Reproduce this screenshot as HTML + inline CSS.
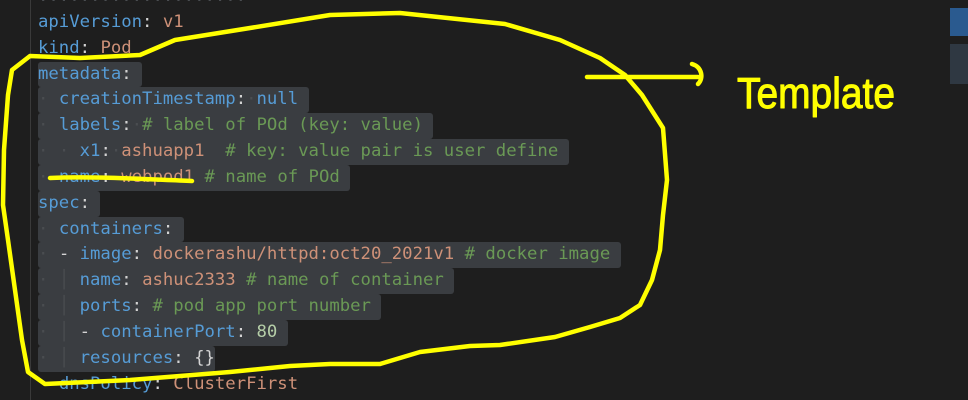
<!DOCTYPE html>
<html><head><meta charset="utf-8"><style>
html,body{margin:0;padding:0;width:968px;height:400px;background:#1e1e1e;overflow:hidden}
.code{position:absolute;left:38px;top:-16px;font-family:"DejaVu Sans Mono","Liberation Mono",monospace;font-size:17.3px;line-height:25.85px;color:#d4d4d4;white-space:normal}
.l{height:25.85px;white-space:pre;overflow:hidden}
.h{background:#3a3d41;display:inline-block;height:25.85px;vertical-align:top;border-radius:3px}
.k{color:#569cd6}.s{color:#ce9178}.c{color:#6a9955}.n{color:#b5cea8}.p{color:#d4d4d4}
.d{color:#4a4d51}
.guide{position:absolute;left:30px;top:0;width:1px;height:400px;background:#3a3a3a}
</style></head><body>
<div class="guide"></div>
<div class="code">
<div class="l"><span class="d">....................</span></div>
<div class="l"><span class="k">apiVersion</span>: <span class="s">v1</span></div>
<div class="l"><span class="k">kind</span>: <span class="s">Pod</span></div>
<div class="l"><span class="h"><span class="k">metadata</span>: </span></div>
<div class="l"><span class="h"><span class="d">·</span> <span class="k">creationTimestamp</span>:<span class="d">·</span><span class="k">null</span> </span></div>
<div class="l"><span class="h"><span class="d">·</span> <span class="k">labels</span>:<span class="d">·</span><span class="c"># label of POd (key: value)</span> </span></div>
<div class="l"><span class="h"><span class="d">·</span> <span class="d">·</span> <span class="k">x1</span>:<span class="d">·</span><span class="s">ashuapp1</span>  <span class="c"># key: value pair is user define</span> </span></div>
<div class="l"><span class="h"><span class="d">·</span> <span class="k">name</span>: <span class="s">webpod1</span> <span class="c"># name of POd</span> </span></div>
<div class="l"><span class="h"><span class="k">spec</span>: </span></div>
<div class="l"><span class="h"><span class="d">·</span> <span class="k">containers</span>: </span></div>
<div class="l"><span class="h"><span class="d">·</span> <span class="p">-</span> <span class="k">image</span>: <span class="s">dockerashu/httpd:oct20_2021v1</span> <span class="c"># docker image</span> </span></div>
<div class="l"><span class="h"><span class="d">·</span> <span class="d">│</span> <span class="k">name</span>: <span class="s">ashuc2333</span> <span class="c"># name of container</span> </span></div>
<div class="l"><span class="h"><span class="d">·</span> <span class="d">│</span> <span class="k">ports</span>: <span class="c"># pod app port number</span> </span></div>
<div class="l"><span class="h"><span class="d">·</span> <span class="d">│</span> <span class="p">-</span> <span class="k">containerPort</span>: <span class="n">80</span> </span></div>
<div class="l"><span class="h"><span class="d">·</span> <span class="d">│</span> <span class="k">resources</span>: {}</span></div>
<div class="l">  <span class="k">dnsPolicy</span>: <span class="s">ClusterFirst</span></div>
</div>
<div style="position:absolute;left:950px;top:8px;width:18px;height:28px;background:#2a5a8f"></div>
<div style="position:absolute;left:950px;top:44px;width:18px;height:40px;background:#3a4a5a;opacity:.6"></div>
<svg width="968" height="400" style="position:absolute;left:0;top:0" fill="none" stroke="#ffff00" stroke-width="4.5" stroke-linecap="round" stroke-linejoin="round">
<path d="M3,205 L4,150 L8,95 L12,70 L30,56 L80,58 L140,55 L175,40 L250,28 L330,15 L400,13 L505,24 L560,40 L600,58 L625,75 L642,95 L663,128 L667,180 L663,215 L660,250 L652,280 L640,305 L620,318 L590,327 L555,337 L500,345 L470,346 L420,352 L380,364 L330,364 L290,366 L230,372 L130,380 L45,384 L28,372 L22,340 L15,290 L8,240 Z"/>
<path d="M50,178 C90,176 140,179 192,181"/>
<path d="M587,77 L698,77 M692,64 C702,67 704,78 698,84"/>
<text x="737" y="108" fill="#ffff00" stroke="#ffff00" stroke-width="1" font-family="Liberation Sans, sans-serif" font-size="44" textLength="158" lengthAdjust="spacingAndGlyphs">Template</text>
</svg>
</body></html>
